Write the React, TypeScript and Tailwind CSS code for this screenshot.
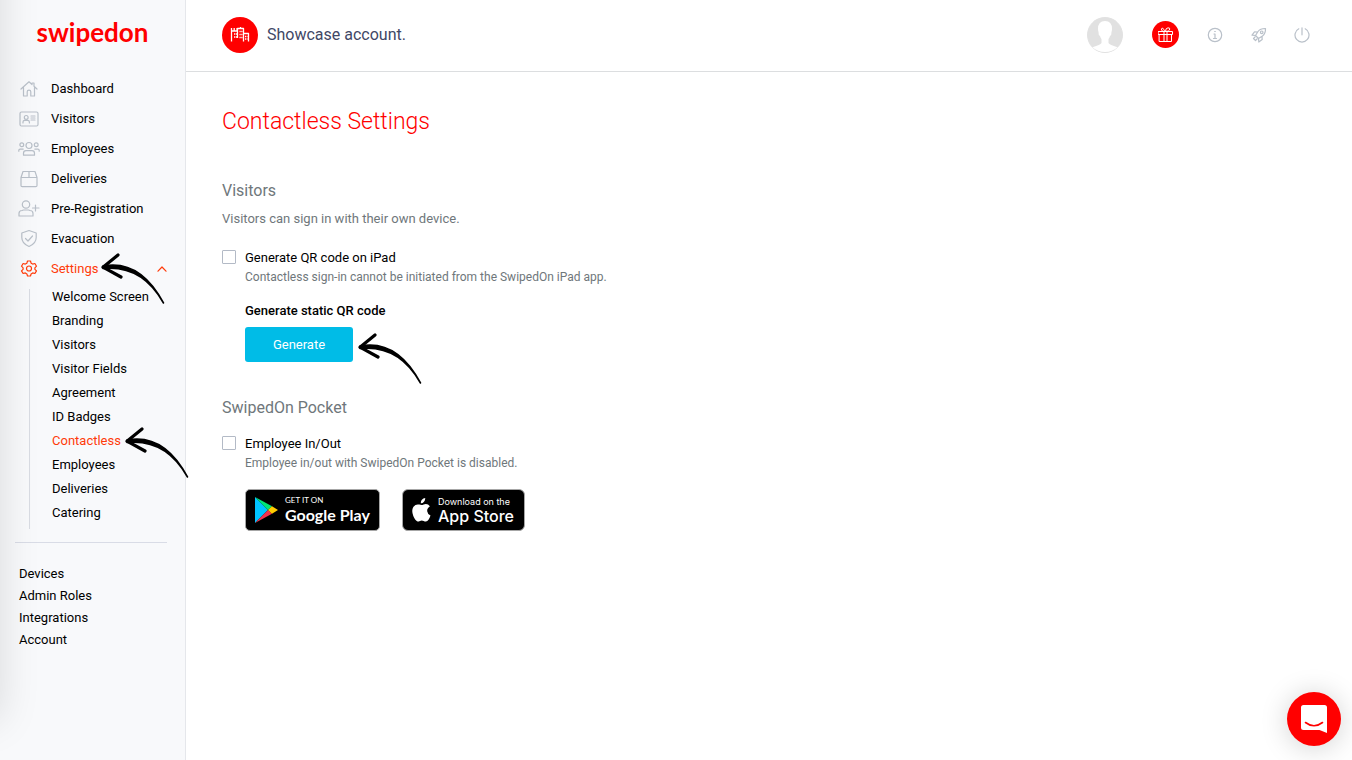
import type { ReactNode } from 'react';

const iconProps = {
  fill: 'none',
  stroke: 'currentColor',
  strokeWidth: 1.2,
  strokeLinecap: 'round' as const,
  strokeLinejoin: 'round' as const,
};

const navItems: { label: string; icon: ReactNode }[] = [
  {
    label: 'Dashboard',
    icon: <path d="M2 10 10 2.8l3 2.7V4h2v3.300L18 10M4.500 8.600V17h3.700v-4.200q0-1.700 1.800-1.700t1.800 1.700V17h3.700V8.600" />,
  },
  {
    label: 'Visitors',
    icon: (
      <>
        <rect x="1" y="3" width="18" height="14" rx="1.5" />
        <circle cx="7.2" cy="8.4" r="1.9" />
        <path d="M4 14v-1q0-1.6 1.8-1.6h2.8q1.8 0 1.8 1.6v1M12 7h4M12 9h4M12 11h4" />
      </>
    ),
  },
  {
    label: 'Employees',
    icon: (
      <>
        <circle cx="10" cy="6.500" r="3" />
        <circle cx="2.8" cy="5.800" r="1.9" />
        <circle cx="17.2" cy="5.800" r="1.9" />
        <path d="M4.500 16.200v-2q0-2.500 2.500-2.500h6q2.500 0 2.500 2.500v2zM-.2 12.200v-.8q0-1.300 1.300-1.300h3.100M20.200 12.200v-.8q0-1.300-1.300-1.300h-3.100" />
      </>
    ),
  },
  {
    label: 'Deliveries',
    icon: <path d="M2 8.500 4 2.500h12l2 6v8q0 1.200-1.200 1.200H3.200Q2 17.700 2 16.500zM2 8.500h16M10 2.500v6" />,
  },
  {
    label: 'Pre-Registration',
    icon: (
      <>
        <circle cx="7" cy="5.500" r="3.700" />
        <path d="M0 17v-2.500q0-3 3-3l1.500-.5h5l1.500.5q3 0 3 3V17zM16.500 6v6M13.500 9h6.500" />
      </>
    ),
  },
  {
    label: 'Evacuation',
    icon: <path d="M10 1.500 17.200 4v4.500q0 6-7.200 9-7.200-3-7.200-9V4zM6.500 9.500 9 12l4.500-5" />,
  },
];

const settingsItems = [
  'Welcome Screen',
  'Branding',
  'Visitors',
  'Visitor Fields',
  'Agreement',
  'ID Badges',
  'Contactless',
  'Employees',
  'Deliveries',
  'Catering',
];

const footerItems = ['Devices', 'Admin Roles', 'Integrations', 'Account'];

function Arrow({ className }: { className: string }) {
  return (
    <svg width="66" height="52" viewBox="0 0 66 52" className={`absolute pointer-events-none ${className}`}>
      <path
        d="M3 13Q40 6 63.500 50Q42 11.500 3 15.500z"
        stroke="#000"
        strokeWidth="1.600"
        strokeLinejoin="round"
      />
      <path d="M18 2 3 14.200 21 24" fill="none" stroke="#000" strokeWidth="3.200" strokeLinecap="round" strokeLinejoin="round" />
    </svg>
  );
}

function Sidebar() {
  return (
    <aside className="relative z-10 w-[186px] shrink-0 border-r border-[#e5e7eb] bg-[#f8f9fb]">
      <div className="absolute -top-20 bottom-10 right-full w-20 shadow-[0_0_40px_rgba(0,0,0,0.13)]" />

      <div className="flex h-[74px] items-start justify-center pt-3">
        <a href="#home" className="font-['Lato'] text-[26px] leading-10 font-bold text-[#ff0000]">
          swipedon
        </a>
      </div>

      <nav>
        {navItems.map((item) => (
          <a key={item.label} href="#nav" className="flex h-[30px] items-center gap-3 pl-[19px] text-[13px]">
            <svg width="20" height="20" viewBox="0 0 20 20" className="overflow-visible text-[#b9c0c9]" {...iconProps}>
              {item.icon}
            </svg>
            {item.label}
          </a>
        ))}
        <a href="#settings" className="relative flex h-[30px] items-center gap-3 pl-[19px] text-[13px] text-[#ff3b0a]">
          <svg width="20" height="20" viewBox="0 0 20 20" {...iconProps}>
            <circle cx="10" cy="9.500" r="2.500" />
            <path d="M8.500 2h3l.6 2.200 1.600.9 2.200-.6 1.600 2.700-1.600 1.600v1.500l1.600 1.600-1.600 2.600-2.200-.6-1.600 1-.6 2.100h-3l-.6-2.100-1.600-1-2.200.6-1.600-2.600 1.600-1.600V8.800L2.500 7.200 4.100 4.500l2.200.6 1.600-.9z" />
          </svg>
          Settings
          <svg width="10" height="6" viewBox="0 0 10 6" className="mr-[18px] ml-auto" {...iconProps}>
            <path d="M1 5.200 5 1l4 4.200" />
          </svg>
          <Arrow className="-top-px left-[100px]" />
        </a>

        <ul className="mt-[5px] ml-[29px] border-l border-[#d9dce3]">
          {settingsItems.map((label) => (
            <li key={label} className="relative h-6 pl-[22px] text-[13px] leading-4">
              <a href="#settings" className={label === 'Contactless' ? 'text-[#ff3b0a]' : ''}>
                {label}
              </a>
              {label === 'Contactless' && <Arrow className="-top-1.5 left-[94px]" />}
            </li>
          ))}
        </ul>
      </nav>

      <ul className="mt-[13px] mr-[18px] ml-[15px] border-t border-[#d9dce6] pt-5 pl-1 text-[13px] leading-[22px]">
        {footerItems.map((label) => (
          <li key={label}>
            <a href="#footer">{label}</a>
          </li>
        ))}
      </ul>
    </aside>
  );
}

function Header() {
  return (
    <header className="flex h-[72px] items-center border-b border-[#dcdee0] pr-[42px] pb-0.5 pl-9">
      <div className="flex size-9 items-center justify-center rounded-full bg-[#ff0000] text-white">
        <svg width="20" height="18" viewBox="0 0 20 18" {...iconProps} strokeLinecap="butt" strokeWidth="1.300">
          <path d="M1.500 15.500V5H7M7.500 12V2.500h6v13M13.500 7.500h5v8M1.500 5V2M4.200 5V2M7 5V2M10.500 2.500V1" />
          <path d="M4 8h3M4 11h3M9.500 5.500h3M9.500 8.500h3M9.500 11.500h3M15 10.500h2.500M15 13h2.500" strokeWidth="1.500" strokeDasharray="1.200 .6" />
        </svg>
      </div>
      <span className="ml-[9px] text-base text-[#414766]">Showcase account.</span>

      <div className="ml-auto flex items-center text-[#b9c0c9]">
        <button aria-label="Profile">
          <svg width="36" height="36" viewBox="0 0 36 36" className="block">
            <circle cx="18" cy="18" r="17.500" fill="#e1e1e1" stroke="#e1e1e1" />
            <path
              d="M18 4q7 0 7 8 0 1.500-.5 3 .2 3-1.500 4-.5 2-1.500 3v4q1 2 9 4.200Q25.500 35 18 35T5.500 30.200q8-2.200 9-4.200v-4q-1-1-1.500-3-1.700-1-1.500-4-.5-1.500-.5-3 0-8 7-8"
              fill="#fff"
            />
          </svg>
        </button>
        <button aria-label="What's new" className="ml-[29px] flex size-[27px] items-center justify-center rounded-full bg-[#ff0000] text-white">
          <svg width="15" height="15" viewBox="0 0 15 15" {...iconProps} strokeWidth="1">
            <path d="M.5 4.500h14v3H.5zM1.500 7.500h12v7h-12zM6 4.500v10M9 4.500v10M7.500 4.500Q3 4.500 3.500 2T7.500 4.500Q7.500 1 10 .8T11.500 3Q11 4.500 7.500 4.500" />
          </svg>
        </button>
        <button aria-label="Info" className="ml-7">
          <svg width="16" height="16" viewBox="0 0 16 16" className="block" {...iconProps}>
            <circle cx="8" cy="8" r="6.700" />
            <path d="M7 7h1v4.500M6.500 11.500h3M7.700 4.500h.6" />
          </svg>
        </button>
        <button aria-label="Launch" className="ml-7">
          <svg width="16" height="16" viewBox="0 0 16 16" className="block" {...iconProps}>
            <path d="M14.500 1.500q-5-.2-7.500 3L4.500 8.500l3 3 4-2.500q3.200-2.500 3-7.500zM6.500 5l-3-.2L1 8.200l3.500.3M11 9.500l.2 3-3.400 2.500-.3-3.500M4 10l-1.500 1.500 2 2L6 12" />
            <circle cx="10.700" cy="5.300" r="1.300" />
          </svg>
        </button>
        <button aria-label="Log out" className="ml-[27px]">
          <svg width="16" height="16" viewBox="0 0 16 16" className="block" {...iconProps}>
            <path d="M8 .8v7M4.800 1.800A7 7 0 1 0 11.200 1.800" />
          </svg>
        </button>
      </div>
    </header>
  );
}

function CheckRow({ id, label, hint }: { id: string; label: string; hint: string }) {
  return (
    <div className="flex items-start gap-[9px]">
      <input
        id={id}
        type="checkbox"
        className="mt-0.5 size-[14px] appearance-none rounded-[1px] border border-[#b3bac6] bg-white checked:bg-[#00bce7]"
      />
      <div>
        <label htmlFor={id} className="block text-[13px] leading-5">
          {label}
        </label>
        <p className="text-[12px] leading-[18px] text-[#6f777b]">{hint}</p>
      </div>
    </div>
  );
}

function GooglePlayBadge() {
  return (
    <a href="#google-play" className="flex h-[42px] w-[135px] items-center gap-[7px] rounded-[5px] border border-[#a6a6a6] bg-black pl-[9px] text-white">
      <svg width="23" height="26" viewBox="0 0 23 26" className="shrink-0">
        <path d="M0 0v26L13 13z" fill="#00c3ff" />
        <path d="M0 0 17 9.200 13 13z" fill="#00e676" />
        <path d="M0 26 17 16.800 13 13z" fill="#f5314b" />
        <path d="M17 9.200 23 13l-6 3.800L13 13z" fill="#ffcc00" />
      </svg>
      <span className="font-['Lato'] whitespace-nowrap">
        <span className="block text-[8px] leading-[9px]">GET IT ON</span>
        <span className="block text-[16px] leading-5 font-bold">Google Play</span>
      </span>
    </a>
  );
}

function AppStoreBadge() {
  return (
    <a href="#app-store" className="flex h-[42px] w-[123px] items-center gap-[7px] rounded-[6px] border border-[#a6a6a6] bg-black pl-[9px] text-white">
      <svg width="19" height="24" viewBox="0 0 19 24" fill="currentColor" className="shrink-0">
        <path d="M13.200 0q.2 2-1.200 3.700T8.900 5.300q-.3-1.900 1-3.500T13.200 0M9.600 7.100q.8 0 2-.6 3.800-1.400 6.300 1.700-3 1.800-2.700 5 .3 2.900 3.300 4.200-1.700 5.400-4.600 6-1 .1-2.200-.5-1.900-.8-3.800 0-1.500.7-2.400.5Q3.300 22.700 1.300 18q-2.200-5.600.2-9.200 2.200-3 5.800-2.200z" />
      </svg>
      <span className="font-['Inter'] whitespace-nowrap">
        <span className="block text-[9px] leading-[11px]">Download on the</span>
        <span className="block text-[16px] leading-[18px] font-medium">App Store</span>
      </span>
    </a>
  );
}

export default function App() {
  return (
    <div className="flex min-h-screen bg-white font-['Roboto',sans-serif] text-black">
      <Sidebar />

      <div className="min-w-0 flex-1">
        <Header />
        <main className="px-9 pt-[34px]">
          <h1 className="text-[23px] leading-8 font-light text-[#ff0000]">Contactless Settings</h1>

          <section className="mt-[41px]">
            <h2 className="text-base leading-6 text-[#6f777b]">Visitors</h2>
            <p className="mt-1.5 text-[13px] leading-5 text-[#6f777b]">Visitors can sign in with their own device.</p>
            <div className="mt-[19px]">
              <CheckRow id="qr-ipad" label="Generate QR code on iPad" hint="Contactless sign-in cannot be initiated from the SwipedOn iPad app." />
            </div>
            <div className="mt-[15px] ml-[23px]">
              <h3 className="text-[13px] leading-5 font-medium">Generate static QR code</h3>
              <div className="relative mt-1.5 w-fit">
                <button className="h-[35px] w-[108px] rounded-[3px] bg-[#00bce7] text-[13px] text-white">Generate</button>
                <Arrow className="top-[6px] left-[112px]" />
              </div>
            </div>
          </section>

          <section className="mt-[34px]">
            <h2 className="text-base leading-6 text-[#6f777b]">SwipedOn Pocket</h2>
            <div className="mt-3.5">
              <CheckRow id="employee-in-out" label="Employee In/Out" hint="Employee in/out with SwipedOn Pocket is disabled." />
            </div>
            <div className="mt-[17px] ml-[23px] flex gap-[22px]">
              <GooglePlayBadge />
              <AppStoreBadge />
            </div>
          </section>
        </main>
      </div>

      <button
        aria-label="Open chat"
        className="fixed right-[11px] bottom-[14px] flex size-[54px] items-center justify-center rounded-full bg-[#ff0000] shadow-[0_2px_28px_rgba(0,0,0,0.18)]"
      >
        <svg width="26" height="28" viewBox="0 0 26 28">
          <path d="M2.500 0h21Q26 0 26 2.500V28l-7.500-3h-16Q0 25 0 22.500v-20Q0 0 2.500 0" fill="#fff" />
          <path d="M4.500 17.500q8.500 6.500 17 0" fill="none" stroke="#ff0000" strokeWidth="1.600" strokeLinecap="round" />
        </svg>
      </button>
    </div>
  );
}
